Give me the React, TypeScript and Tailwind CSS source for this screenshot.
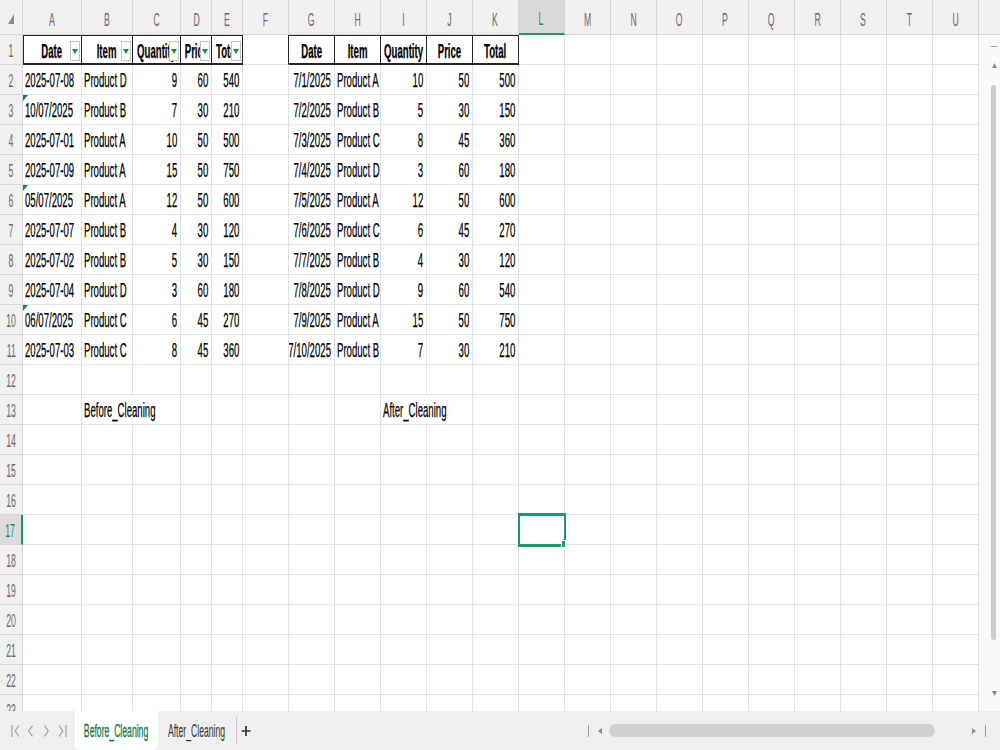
import clsx from "clsx";
import type { ReactNode } from "react";

type Align = "l" | "r" | "c";

type Cell = {
  v: string;
  a?: Align;
  b?: boolean;
  tri?: boolean;
  filter?: boolean;
  w?: string;
  span?: number;
};

const COLS = "ABCDEFGHIJKLMNOPQRSTU".split("");
const WIDTHS = [
  "w-[59px]",
  "w-[51px]",
  "w-[48px]",
  "w-[31px]",
  "w-[31px]",
  ...Array(16).fill("w-[46px]"),
];
const HEAD = ["Date", "Item", "Quantity", "Price", "Total"];

const before = [
  ["2025-07-08", "Product D", "9", "60", "540"],
  ["10/07/2025", "Product B", "7", "30", "210"],
  ["2025-07-01", "Product A", "10", "50", "500"],
  ["2025-07-09", "Product A", "15", "50", "750"],
  ["05/07/2025", "Product A", "12", "50", "600"],
  ["2025-07-07", "Product B", "4", "30", "120"],
  ["2025-07-02", "Product B", "5", "30", "150"],
  ["2025-07-04", "Product D", "3", "60", "180"],
  ["06/07/2025", "Product C", "6", "45", "270"],
  ["2025-07-03", "Product C", "8", "45", "360"],
];

const after = [
  ["7/1/2025", "Product A", "10", "50", "500"],
  ["7/2/2025", "Product B", "5", "30", "150"],
  ["7/3/2025", "Product C", "8", "45", "360"],
  ["7/4/2025", "Product D", "3", "60", "180"],
  ["7/5/2025", "Product A", "12", "50", "600"],
  ["7/6/2025", "Product C", "6", "45", "270"],
  ["7/7/2025", "Product B", "4", "30", "120"],
  ["7/8/2025", "Product D", "9", "60", "540"],
  ["7/9/2025", "Product A", "15", "50", "750"],
  ["7/10/2025", "Product B", "7", "30", "210"],
];

const sheet: Record<number, Record<number, Cell>> = {};
function put(r: number, c: number, cell: Cell) {
  (sheet[r] ??= {})[c] = cell;
}

HEAD.forEach((h, i) => {
  put(1, i, { v: h, a: "c", b: true, filter: true });
  put(1, i + 6, { v: h, a: "c", b: true });
});
before.forEach((row, k) => {
  const r = k + 2;
  // text dates that Excel flags with the green corner marker
  put(r, 0, { v: row[0], a: "l", tri: row[0].includes("/") });
  put(r, 1, { v: row[1], a: "l" });
  [2, 3, 4].forEach((c) => put(r, c, { v: row[c], a: "r" }));
});
after.forEach((row, k) => {
  const r = k + 2;
  put(r, 6, { v: row[0], a: "r" });
  put(r, 7, { v: row[1], a: "l" });
  [2, 3, 4].forEach((c) => put(r, c + 6, { v: row[c], a: "r" }));
});
put(13, 1, { v: "Before_Cleaning", a: "l", w: "w-[99px]", span: 2 });
put(13, 8, { v: "After_Cleaning", a: "l", w: "w-[92px]", span: 2 });

function Txt({ children, a = "l", className }: { children: ReactNode; a?: Align; className?: string }) {
  return (
    <span
      className={clsx(
        "inline-block shrink-0 whitespace-nowrap scale-x-[0.48]",
        a === "l" && "origin-left",
        a === "r" && "origin-right",
        a === "c" && "origin-center",
        className
      )}
    >
      {children}
    </span>
  );
}

function FilterButton() {
  return (
    <div className="absolute right-[1px] top-[6px] z-10 flex h-[20px] w-[10px] items-center justify-center border border-[#c4c4c4] bg-white">
      <svg width="6" height="5" viewBox="0 0 6 5">
        <path d="M0 0h6L3 5z" fill="#1a8a5c" />
      </svg>
    </div>
  );
}

function GridCell({ r, c, cell }: { r: number; c: number; cell?: Cell }) {
  const head = r === 1 && (c <= 4 || (c >= 6 && c <= 10));
  const selected = r === 17 && c === 11;
  return (
    <div
      className={clsx(
        "relative flex h-full shrink-0 items-center border-r border-[#e1e1e1]",
        selected ? "overflow-visible" : "overflow-hidden",
        cell?.w ?? WIDTHS[c],
        cell?.a === "r" ? "justify-end pr-[3px]" : cell?.a === "c" ? "justify-center" : "justify-start pl-[2px]",
        head ? "border-b-2 border-b-[#262626] border-r-[#262626] pt-[3px]" : "border-b pt-[1px]",
        head && (c === 0 ? "shadow-[inset_1px_1px_0_#262626]" : "shadow-[inset_0_1px_0_#262626]"),
        r === 1 && c === 5 && "border-r-[#262626]"
      )}
    >
      {cell?.tri && (
        <svg className="absolute left-0 top-0" width="5" height="6" viewBox="0 0 5 6">
          <path d="M0 0h5L0 6z" fill="#1a7f4b" />
        </svg>
      )}
      {cell && (
        <Txt a={cell.a} className={clsx("text-[20px] leading-[22px] [-webkit-text-stroke:0.25px_#000]", cell.b && "font-bold")}>
          {cell.v}
        </Txt>
      )}
      {cell?.filter && <FilterButton />}
      {selected && (
        <>
          <div className="absolute -left-[1px] -top-[2px] z-20 h-[34px] w-[48px] border-x-2 border-y-[3px] border-[#1a9a68]" />
          <div className="absolute -bottom-[4px] -right-[2px] z-30 h-[8px] w-[5px] border border-white bg-[#1a9a68]" />
        </>
      )}
    </div>
  );
}

function Row({ r }: { r: number }) {
  const cells: ReactNode[] = [];
  const data = sheet[r] ?? {};
  for (let c = 0; c < COLS.length; c++) {
    const cell = data[c];
    cells.push(<GridCell key={c} r={r} c={c} cell={cell} />);
    if (cell?.span) c += cell.span - 1;
  }
  return (
    <div className="flex h-[30px] shrink-0">
      <div
        className={clsx(
          "flex w-[23px] shrink-0 items-center justify-center border-b border-[#d6d6d6] pt-[3px]",
          r === 17 ? "border-r-2 border-r-[#1a9a68] bg-[#dcdcdc] text-[#1a8a5c]" : "border-r bg-[#f0f0f0] text-[#6a6a6a]"
        )}
      >
        <Txt a="c" className="text-[18px] leading-[20px]">
          {r}
        </Txt>
      </div>
      {cells}
    </div>
  );
}

function Chevron({ dir, bar, className }: { dir: "l" | "r"; bar?: boolean; className?: string }) {
  const w = bar ? 9 : 5;
  let d = "";
  if (dir === "l") d = bar ? "M1 1v12M8 1.5 4.2 7 8 12.5" : "M4.5 1.5 0.8 7l3.7 5.5";
  else d = bar ? "M1 1.5 4.8 7 1 12.5M8 1v12" : "M0.5 1.5 4.2 7l-3.7 5.5";
  return (
    <svg className={className} width={w} height="14" viewBox={`0 0 ${w} 14`}>
      <path d={d} fill="none" stroke="#a3a3a3" strokeWidth="1.3" />
    </svg>
  );
}

export default function App() {
  const rows = Array.from({ length: 23 }, (_, i) => i + 1);
  return (
    <div className="flex h-[750px] w-[1000px] flex-col overflow-hidden bg-white font-['Liberation_Sans',Arial,sans-serif] text-black">
      {/* column letters */}
      <div className="flex h-[35px] shrink-0 bg-[#f0f0f0] text-[#6a6a6a]">
        <div className="flex w-[23px] shrink-0 items-end justify-center border-b border-r border-[#d6d6d6] pb-[10px]">
          <svg width="6" height="10" viewBox="0 0 6 10">
            <path d="M6 0v10H0z" fill="#8a8a8a" />
          </svg>
        </div>
        {COLS.map((l, i) => (
          <div
            key={l}
            className={clsx(
              "flex shrink-0 items-center justify-center border-r border-[#d6d6d6] pt-[5px]",
              WIDTHS[i],
              l === "L" ? "border-b-2 border-b-[#1a9a68] bg-[#dadada] text-[#1a8a5c]" : "border-b"
            )}
          >
            <Txt a="c" className="text-[18px] leading-[20px]">
              {l}
            </Txt>
          </div>
        ))}
        <div className="flex-1 border-b border-[#d6d6d6]" />
      </div>

      {/* cells + vertical scrollbar */}
      <div className="flex h-[676px] shrink-0 overflow-hidden">
        <div className="flex w-[979px] shrink-0 flex-col overflow-hidden">
          {rows.map((r) => (
            <Row key={r} r={r} />
          ))}
        </div>
        <div className="flex w-[21px] shrink-0 flex-col items-start bg-[#fafafa] pl-[12px]">
          <div className="mt-[11px] h-px w-[6px] bg-[#9c9c9c]" />
          <svg className="ml-[0.5px] mt-[16px]" width="5" height="5" viewBox="0 0 5 5">
            <path d="M2.5 0 5 5H0z" fill="#8a8a8a" />
          </svg>
          <div className="mt-[17px] h-[555px] w-[5px] rounded-full bg-[#cdcdcd]" />
          <svg className="ml-[0.5px] mt-[51px]" width="5" height="5" viewBox="0 0 5 5">
            <path d="M0 0h5L2.5 5z" fill="#8a8a8a" />
          </svg>
        </div>
      </div>

      {/* sheet tabs and horizontal scrollbar */}
      <div className="flex h-[39px] shrink-0 items-stretch bg-[#efefef]">
        <div className="flex w-[75px] shrink-0 items-center pl-[11px]">
          <Chevron dir="l" bar />
          <Chevron dir="l" className="ml-[8px]" />
          <Chevron dir="r" className="ml-[11px]" />
          <Chevron dir="r" bar className="ml-[9px]" />
        </div>
        <div className="flex w-[83px] shrink-0 items-center justify-center rounded-b-[6px] bg-white text-[#137a45]">
          <Txt a="c" className="text-[18px] leading-[20px] [-webkit-text-stroke:0.3px_#137a45]">
            Before_Cleaning
          </Txt>
        </div>
        <div className="flex w-[78px] shrink-0 items-center justify-center text-[#333]">
          <Txt a="c" className="text-[18px] leading-[20px]">
            After_Cleaning
          </Txt>
        </div>
        <div className="my-[6px] w-px shrink-0 bg-[#c9c9c9]" />
        <div className="flex shrink-0 items-center pl-[4px]">
          <svg width="10" height="12" viewBox="0 0 10 12">
            <path d="M5 1v10M0.5 6h9" stroke="#333" strokeWidth="1.7" />
          </svg>
        </div>
        <div className="ml-auto flex w-[417px] shrink-0 items-center pl-[5px]">
          <div className="h-[12px] w-px bg-[#9c9c9c]" />
          <svg className="ml-[9px]" width="4" height="6" viewBox="0 0 4 6">
            <path d="M4 0v6L0 3z" fill="#8a8a8a" />
          </svg>
          <div className="ml-[7px] h-[13px] w-[326px] rounded-full bg-[#d0d0d0]" />
          <svg className="ml-[37px]" width="4" height="6" viewBox="0 0 4 6">
            <path d="M0 0v6l4-3z" fill="#8a8a8a" />
          </svg>
          <div className="ml-[9px] h-[12px] w-px bg-[#9c9c9c]" />
        </div>
      </div>
    </div>
  );
}
